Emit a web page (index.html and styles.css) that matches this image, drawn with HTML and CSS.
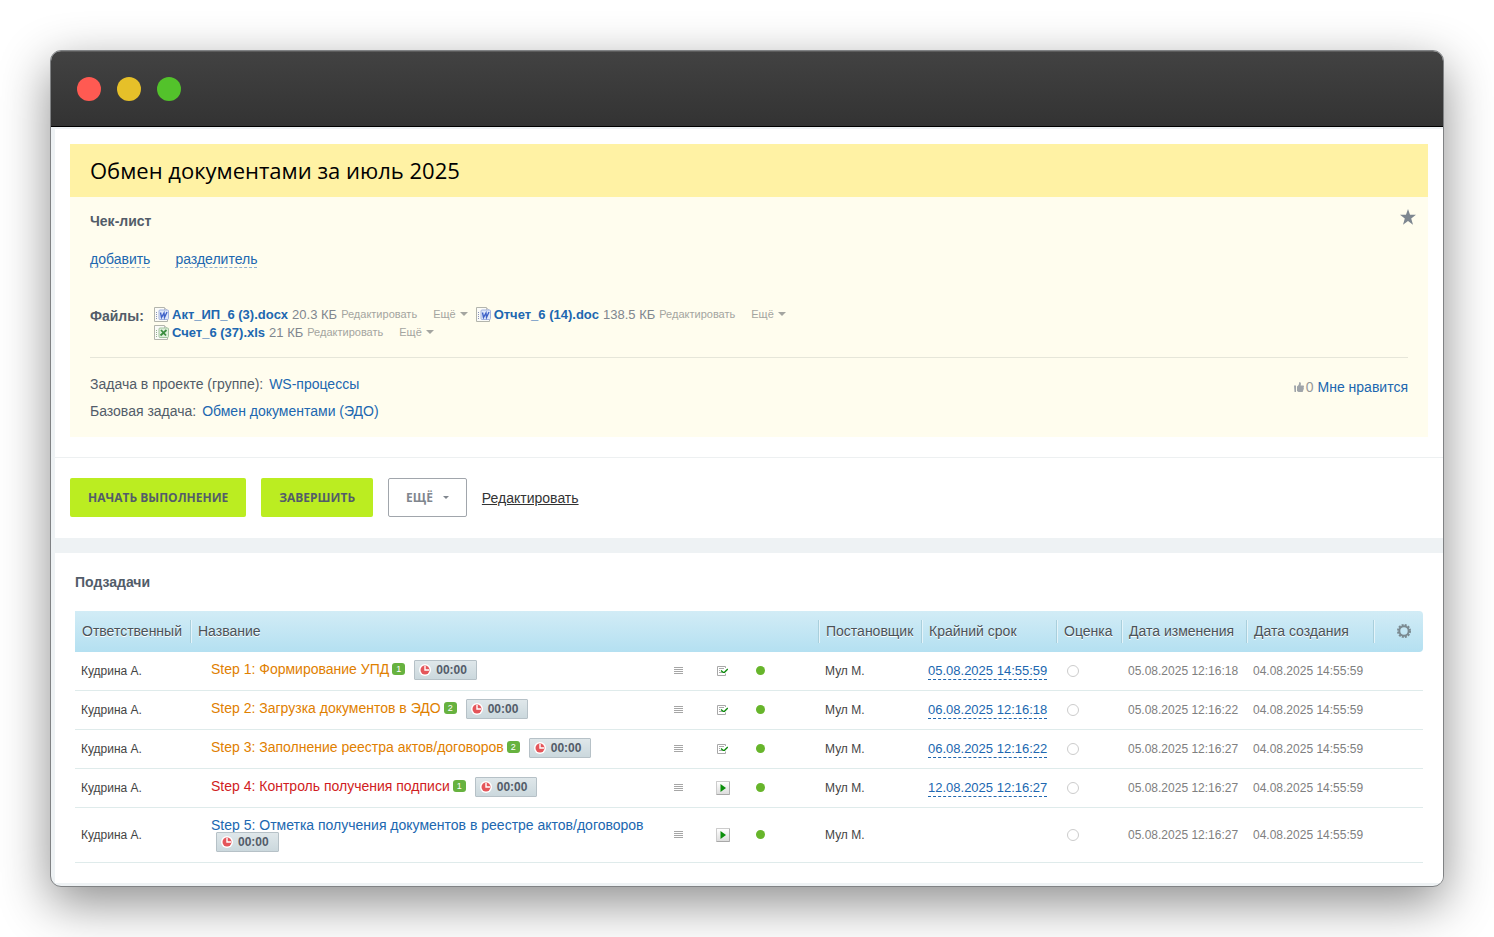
FILE: index.html
```html
<!DOCTYPE html>
<html lang="ru">
<head>
    <meta charset="UTF-8">
    <meta name="viewport" content="width=device-width, initial-scale=1.0">
    <title>Обмен документами за июль 2025</title>
    <link rel="stylesheet" href="styles.css">
</head>
<body>
    <!-- Shared icons -->
    <svg class="sprite" aria-hidden="true">
        <symbol id="i-word" viewBox="0 0 15 15">
            <path d="M.5.5h10l3 3v11H.5z" fill="#fbfbf8" stroke="#b3b5ac"/>
            <path d="M10.500 .5v3h3" fill="#ddd" stroke="#c0c0b8"/>
            <path d="M2.500 5v1M2.500 7v1M2.500 9v1M2.500 11v1" stroke="#8a94b8"/>
            <rect x="5" y="3" width="9.500" height="9.500" rx="1" fill="#dfe8fa" stroke="#a3b3e0"/>
            <path d="M6.500 5.500l1 5L10 6l.5 4.500L13 5" fill="none" stroke="#3f62c8" stroke-width="1.400"/>
        </symbol>
        <symbol id="i-excel" viewBox="0 0 15 15">
            <path d="M.5.5h10l3 3v11H.5z" fill="#fbfbf8" stroke="#b3b5ac"/>
            <path d="M10.500 .5v3h3" fill="#ddd" stroke="#c0c0b8"/>
            <path d="M2.500 5v1M2.500 7v1M2.500 9v1M2.500 11v1" stroke="#93b08f"/>
            <rect x="5" y="3" width="9.500" height="9.500" rx="1" fill="#e0f0dc" stroke="#a3c49f"/>
            <path d="M7 5l5 5.500M12.500 5L6.500 10.500" fill="none" stroke="#3b8d3f" stroke-width="1.800"/>
        </symbol>
        <symbol id="i-clock" viewBox="0 0 12 12">
            <circle cx="6" cy="6" r="6" fill="#fff"/>
            <circle cx="6" cy="6" r="4.500" fill="#e4555a"/>
            <path d="M6 2v4h4" fill="none" stroke="#fff" stroke-width="1.400"/>
        </symbol>
        <symbol id="i-menu" viewBox="0 0 9 8">
            <path d="M0 .5h9M0 2.500h9M0 4.500h9M0 6.500h9" stroke="#a6a6a6"/>
        </symbol>
        <symbol id="i-done" viewBox="0 0 11 10">
            <path d="M8.500 2V.5h-8v9h8V7.500" fill="none" stroke="#a8a8a8"/>
            <path d="M2 2.500h5M2 4.500h1M2 6.500h3" stroke="#aaa"/>
            <path d="M4 4.500l2 1.800h1.500L10.800 3" fill="none" stroke="#0b8a0b" stroke-width="1.300"/>
        </symbol>
        <symbol id="i-play" viewBox="0 0 6 8">
            <path d="M.5 0L6 4 .5 8z" fill="#0c8f0c"/>
        </symbol>
    </svg>

    <div class="window">
        <div class="titlebar">
            <span class="dot dot-red"></span>
            <span class="dot dot-yellow"></span>
            <span class="dot dot-green"></span>
        </div>

        <main class="page">
            <section class="task">
                <div class="panel">
                    <h1>Обмен документами за июль 2025</h1>
                    <div class="checklist-head">
                        <h2>Чек-лист</h2>
                        <button class="star" type="button" aria-label="Важная задача">
                            <svg width="16" height="16" viewBox="0 0 15 15"><path d="M7.500 0l1.900 5.400H15l-4.500 3.500 1.700 5.800-4.700-3.400-4.700 3.400 1.700-5.800L0 5.400h5.600z" fill="#7e8790"/></svg>
                        </button>
                    </div>
                    <div class="panel-body">
                        <div class="checklist-links">
                            <a href="#">добавить</a>
                            <a href="#">разделитель</a>
                        </div>

                        <div class="files">
                            <div class="files-label">Файлы:</div>
                            <ul class="file-list">
                                <li class="file">
                                    <svg width="15" height="15"><use href="#i-word"/></svg>
                                    <a class="file-name" href="#">Акт_ИП_6 (3).docx</a>
                                    <span class="file-size">20.3 КБ</span>
                                    <a class="file-edit" href="#">Редактировать</a>
                                    <button class="file-more" type="button">Ещё</button>
                                </li>
                                <li class="file">
                                    <svg width="15" height="15"><use href="#i-word"/></svg>
                                    <a class="file-name" href="#">Отчет_6 (14).doc</a>
                                    <span class="file-size">138.5 КБ</span>
                                    <a class="file-edit" href="#">Редактировать</a>
                                    <button class="file-more" type="button">Ещё</button>
                                </li>
                                <li class="file">
                                    <svg width="15" height="15"><use href="#i-excel"/></svg>
                                    <a class="file-name" href="#">Счет_6 (37).xls</a>
                                    <span class="file-size">21 КБ</span>
                                    <a class="file-edit" href="#">Редактировать</a>
                                    <button class="file-more" type="button">Ещё</button>
                                </li>
                            </ul>
                        </div>

                        <div class="info">
                            <div class="info-links">
                                <div>Задача в проекте (группе): <a href="#">WS-процессы</a></div>
                                <div>Базовая задача: <a href="#">Обмен документами (ЭДО)</a></div>
                            </div>
                            <div class="likes">
                                <svg width="10" height="10" viewBox="0 0 10 10"><path d="M0 3.500h2V10H.5zM3 4.500C5 3.500 5 1.500 5.300 0 7.300 0 7 2 6.600 3.500H9c1.200 0 1.200 1.500.5 1.800.7.500.5 1.500-.1 1.700.4.600.2 1.300-.4 1.500.2.900-.3 1.500-1.200 1.500H4.500L3 9z" fill="#a0a5aa"/></svg>
                                <span class="likes-count">0</span>
                                <a href="#">Мне нравится</a>
                            </div>
                        </div>
                    </div>
                </div>
            </section>

            <div class="actions">
                <button class="btn btn-green" type="button">Начать выполнение</button>
                <button class="btn btn-green" type="button">Завершить</button>
                <button class="btn btn-more" type="button">Ещё</button>
                <a class="edit-link" href="#">Редактировать</a>
            </div>

            <section class="subtasks">
                <h2>Подзадачи</h2>
                <table class="grid">
                    <colgroup>
                        <col class="col-user">
                        <col class="col-name">
                        <col class="col-menu">
                        <col class="col-action">
                        <col class="col-state">
                        <col class="col-author">
                        <col class="col-deadline">
                        <col class="col-mark">
                        <col class="col-date">
                        <col class="col-created">
                        <col class="col-gear">
                    </colgroup>
                    <thead>
                        <tr>
                            <th>Ответственный</th>
                            <th colspan="4">Название</th>
                            <th>Постановщик</th>
                            <th>Крайний срок</th>
                            <th>Оценка</th>
                            <th>Дата изменения</th>
                            <th>Дата создания</th>
                            <th class="gear-cell">
                                <button class="icon-btn" type="button" aria-label="Настройки">
                                    <svg width="14" height="14" viewBox="0 0 14 14"><circle cx="7" cy="7" r="6" fill="none" stroke="#7b8a91" stroke-width="2" stroke-dasharray="2 1.142"/><circle cx="7" cy="7" r="4.700" fill="none" stroke="#7b8a91" stroke-width="2"/></svg>
                                </button>
                            </th>
                        </tr>
                    </thead>
                    <tbody>
                        <tr>
                            <td class="user">Кудрина А.</td>
                            <td class="name"><div class="name-line"><a class="orange" href="#">Step 1: Формирование УПД</a><span class="count">1</span><span class="timer"><svg width="12" height="12"><use href="#i-clock"/></svg>00:00</span></div></td>
                            <td class="ico"><button class="icon-btn" type="button" aria-label="Меню"><svg width="9" height="8"><use href="#i-menu"/></svg></button></td>
                            <td class="ico"><button class="icon-btn" type="button" aria-label="Завершить"><svg width="11" height="10"><use href="#i-done"/></svg></button></td>
                            <td class="state"><span class="state-dot"></span></td>
                            <td>Мул М.</td>
                            <td><a class="deadline" href="#">05.08.2025 14:55:59</a></td>
                            <td class="mark"><button class="mark-btn" type="button" aria-label="Оценка"></button></td>
                            <td class="date">05.08.2025 12:16:18</td>
                            <td class="date">04.08.2025 14:55:59</td>
                            <td></td>
                        </tr>
                        <tr>
                            <td class="user">Кудрина А.</td>
                            <td class="name"><div class="name-line"><a class="orange" href="#">Step 2: Загрузка документов в ЭДО</a><span class="count">2</span><span class="timer"><svg width="12" height="12"><use href="#i-clock"/></svg>00:00</span></div></td>
                            <td class="ico"><button class="icon-btn" type="button" aria-label="Меню"><svg width="9" height="8"><use href="#i-menu"/></svg></button></td>
                            <td class="ico"><button class="icon-btn" type="button" aria-label="Завершить"><svg width="11" height="10"><use href="#i-done"/></svg></button></td>
                            <td class="state"><span class="state-dot"></span></td>
                            <td>Мул М.</td>
                            <td><a class="deadline" href="#">06.08.2025 12:16:18</a></td>
                            <td class="mark"><button class="mark-btn" type="button" aria-label="Оценка"></button></td>
                            <td class="date">05.08.2025 12:16:22</td>
                            <td class="date">04.08.2025 14:55:59</td>
                            <td></td>
                        </tr>
                        <tr>
                            <td class="user">Кудрина А.</td>
                            <td class="name"><div class="name-line"><a class="orange" href="#">Step 3: Заполнение реестра актов/договоров</a><span class="count">2</span><span class="timer"><svg width="12" height="12"><use href="#i-clock"/></svg>00:00</span></div></td>
                            <td class="ico"><button class="icon-btn" type="button" aria-label="Меню"><svg width="9" height="8"><use href="#i-menu"/></svg></button></td>
                            <td class="ico"><button class="icon-btn" type="button" aria-label="Завершить"><svg width="11" height="10"><use href="#i-done"/></svg></button></td>
                            <td class="state"><span class="state-dot"></span></td>
                            <td>Мул М.</td>
                            <td><a class="deadline" href="#">06.08.2025 12:16:22</a></td>
                            <td class="mark"><button class="mark-btn" type="button" aria-label="Оценка"></button></td>
                            <td class="date">05.08.2025 12:16:27</td>
                            <td class="date">04.08.2025 14:55:59</td>
                            <td></td>
                        </tr>
                        <tr>
                            <td class="user">Кудрина А.</td>
                            <td class="name"><div class="name-line"><a class="red" href="#">Step 4: Контроль получения подписи</a><span class="count">1</span><span class="timer"><svg width="12" height="12"><use href="#i-clock"/></svg>00:00</span></div></td>
                            <td class="ico"><button class="icon-btn" type="button" aria-label="Меню"><svg width="9" height="8"><use href="#i-menu"/></svg></button></td>
                            <td class="ico"><button class="play-btn" type="button" aria-label="Начать"><svg width="6" height="8"><use href="#i-play"/></svg></button></td>
                            <td class="state"><span class="state-dot"></span></td>
                            <td>Мул М.</td>
                            <td><a class="deadline" href="#">12.08.2025 12:16:27</a></td>
                            <td class="mark"><button class="mark-btn" type="button" aria-label="Оценка"></button></td>
                            <td class="date">05.08.2025 12:16:27</td>
                            <td class="date">04.08.2025 14:55:59</td>
                            <td></td>
                        </tr>
                        <tr>
                            <td class="user">Кудрина А.</td>
                            <td class="name"><div class="name-line"><a href="#">Step 5: Отметка получения документов в реестре актов/договоров</a><span class="timer"><svg width="12" height="12"><use href="#i-clock"/></svg>00:00</span></div></td>
                            <td class="ico"><button class="icon-btn" type="button" aria-label="Меню"><svg width="9" height="8"><use href="#i-menu"/></svg></button></td>
                            <td class="ico"><button class="play-btn" type="button" aria-label="Начать"><svg width="6" height="8"><use href="#i-play"/></svg></button></td>
                            <td class="state"><span class="state-dot"></span></td>
                            <td>Мул М.</td>
                            <td></td>
                            <td class="mark"><button class="mark-btn" type="button" aria-label="Оценка"></button></td>
                            <td class="date">05.08.2025 12:16:27</td>
                            <td class="date">04.08.2025 14:55:59</td>
                            <td></td>
                        </tr>
                    </tbody>
                </table>
            </section>
        </main>
    </div>
</body>
</html>
```

FILE: styles.css
```css
* {
    box-sizing: border-box;
}
body {
    margin: 0;
    padding: 50px;
    background-color: #fff;
    color: #525c69;
    font-family: 'Liberation Sans', Arial, sans-serif;
    font-size: 14px;
}
a {
    color: #2067b0;
    text-decoration: none;
}
button {
    padding: 0;
    border: none;
    background: none;
    font-family: inherit;
    cursor: pointer;
}
h1, h2 {
    margin: 0;
}
h2 {
    font-size: 14px;
    line-height: 20px;
}
svg {
    display: block;
    flex-shrink: 0;
}
.sprite {
    position: absolute;
    width: 0;
    height: 0;
}

/* Window frame */
.window {
    border: 1px solid #808284;
    border-radius: 11px;
    background-color: #eef2f4;
    overflow: hidden;
    box-shadow: 0 16px 50px rgba(0,0,0,0.45);
}
.titlebar {
    display: flex;
    align-items: center;
    gap: 16px;
    height: 76px;
    padding: 0 26px;
    background: linear-gradient(#424242, #333);
    border-top: 1px solid #5c5c5c;
    border-bottom: 1px solid #000;
}
.dot {
    width: 24px;
    height: 24px;
    border-radius: 50%;
}
.dot-red {
    background-color: #ff5a52;
}
.dot-yellow {
    background-color: #e6c029;
}
.dot-green {
    background-color: #53c22b;
}
.page {
    padding: 2px 0 3px 4px;
}

/* Task description */
.task {
    padding: 15px 15px 20px;
    background-color: #fff;
}
.panel {
    background-color: #fffdee;
}
h1 {
    padding: 0 20px;
    background-color: #fff2a4;
    color: #000;
    font-family: 'Open Sans', sans-serif;
    font-size: 22px;
    font-weight: normal;
    line-height: 53px;
}
.checklist-head {
    display: flex;
    justify-content: space-between;
    align-items: flex-start;
    padding: 12px 12px 0 20px;
}
.checklist-head h2 {
    padding-top: 2px;
}
.panel-body {
    padding: 20px 20px 12px;
}
.checklist-links {
    display: flex;
    gap: 25px;
    line-height: 16px;
}
.checklist-links a {
    border-bottom: 1px dashed #8fb0d0;
}
.files {
    display: flex;
    padding: 37px 0 16px;
    border-bottom: 1px solid #e6e6d9;
}
.files-label {
    width: 64px;
    font-weight: bold;
    line-height: 22px;
}
.file-list {
    display: flex;
    flex-wrap: wrap;
    column-gap: 8px;
    max-width: 800px;
    margin: 0;
    padding: 0;
    list-style: none;
}
.file {
    display: flex;
    align-items: center;
    height: 18px;
}
.file-name {
    margin: 0 4px 0 3px;
    font-size: 13px;
    font-weight: bold;
}
.file-size {
    margin-right: 4px;
    color: #80868e;
    font-size: 13px;
}
.file-edit, .file-more {
    color: #a4a5a0;
    font-size: 11px;
}
.file-more {
    display: flex;
    align-items: center;
    gap: 4px;
    margin-left: 16px;
}
.file-more::after, .btn-more::after {
    content: '';
    border: 3px solid transparent;
    border-top-color: currentColor;
    border-bottom: none;
}
.file-more::after {
    border-width: 4px 4px 0;
}
.info {
    display: flex;
    justify-content: space-between;
    padding-top: 13px;
    line-height: 27px;
}
.info-links a {
    margin-left: 2px;
}
.likes {
    display: flex;
    align-items: center;
    height: 32px;
}
.likes-count {
    margin: 0 4px 0 2px;
    color: #999;
}

/* Buttons */
.actions {
    display: flex;
    align-items: center;
    gap: 15px;
    padding: 20px 15px 21px;
    background-color: #fff;
    border-top: 1px solid #edf0f1;
}
.btn {
    height: 39px;
    padding: 0 18px;
    border-radius: 2px;
    font-family: 'Open Sans', sans-serif;
    font-size: 12px;
    font-weight: bold;
    text-transform: uppercase;
}
.btn-green {
    background-color: #bbed21;
    color: #535c69;
}
.btn-more {
    display: flex;
    align-items: center;
    gap: 10px;
    padding: 0 17px;
    border: 1px solid #a1a6ac;
    color: #80868e;
}
.edit-link {
    color: #333;
    text-decoration: underline;
}

/* Subtasks */
.subtasks {
    margin-top: 15px;
    padding: 19px 20px 20px;
    background-color: #fff;
}
.grid {
    width: 100%;
    margin-top: 19px;
    border-spacing: 0;
    table-layout: fixed;
}
.col-user {
    width: 115px;
}
.col-menu {
    width: 45px;
}
.col-action {
    width: 43px;
}
.col-state {
    width: 74px;
}
.col-author {
    width: 103px;
}
.col-deadline {
    width: 135px;
}
.col-mark {
    width: 65px;
}
.col-date {
    width: 125px;
}
.col-created {
    width: 127px;
}
.col-gear {
    width: 50px;
}
.grid th {
    height: 41px;
    padding: 0 0 2px 8px;
    background:
        linear-gradient(90deg, #a9cfdc 50%, #e4f4fa 50%) no-repeat left center / 2px 23px,
        linear-gradient(#d2ecf6, #b4e0f1);
    color: #4a5258;
    font-weight: normal;
    text-align: left;
    text-shadow: 0 1px 0 #fff;
    white-space: nowrap;
}
.grid th:first-child {
    padding-left: 7px;
    background: linear-gradient(#d2ecf6, #b4e0f1);
}
.grid th:last-child {
    border-radius: 0 4px 4px 0;
}
.grid .gear-cell {
    padding: 0 12px 2px 0;
}
.gear-cell .icon-btn {
    margin-left: auto;
}
.grid td {
    padding: 0 0 0 7px;
    border-bottom: 1px solid #dfebeb;
    color: #444;
    font-size: 12px;
}
.grid .user {
    padding-left: 6px;
}
.grid .name {
    padding: 8px 0 10px 21px;
    font-size: 14px;
}
.name-line {
    display: flex;
    flex-wrap: wrap;
    align-items: flex-start;
    line-height: 16px;
}
.name-line a {
    height: 16px;
    line-height: 18px;
}
.name-line .orange {
    color: #df8000;
}
.name-line .red {
    color: #d01c22;
}
.count {
    width: 13px;
    height: 12px;
    margin: 3px 4px 0 3px;
    border-radius: 3px;
    background-color: #67b23f;
    color: #fff;
    font-size: 9px;
    line-height: 12px;
    text-align: center;
}
.timer {
    display: flex;
    align-items: center;
    gap: 5px;
    height: 20px;
    margin-left: 5px;
    padding: 0 9px 0 4px;
    border: 1px solid #b6c1c7;
    border-radius: 1px;
    background: linear-gradient(#dfe7ea, #cbd8dd);
    color: #535c69;
    font-size: 12px;
    font-weight: bold;
}
.icon-btn, .play-btn {
    display: block;
}
.grid .ico {
    padding: 0;
}
.ico button {
    margin: 0 auto;
}
.play-btn {
    width: 14px;
    height: 14px;
    border: 1px solid #ccc;
    border-right-color: #b0b0b0;
    border-bottom-color: #a8a8a8;
    border-radius: 1px;
    background: linear-gradient(#fff, #ddd);
}
.play-btn svg {
    margin: 0 auto;
}
.grid .state {
    padding: 0 0 1px 12px;
}
.state-dot {
    display: block;
    width: 9px;
    height: 9px;
    border-radius: 50%;
    background-color: #67b52b;
}
.deadline {
    display: inline-block;
    border-bottom: 1px dashed #2067b0;
    font-size: 13px;
    line-height: 17px;
}
.grid .mark {
    padding-left: 11px;
}
.mark-btn {
    display: block;
    width: 12px;
    height: 12px;
    border: 1px solid #ccc;
    border-radius: 50%;
}
.grid .date {
    color: #808080;
}
```
